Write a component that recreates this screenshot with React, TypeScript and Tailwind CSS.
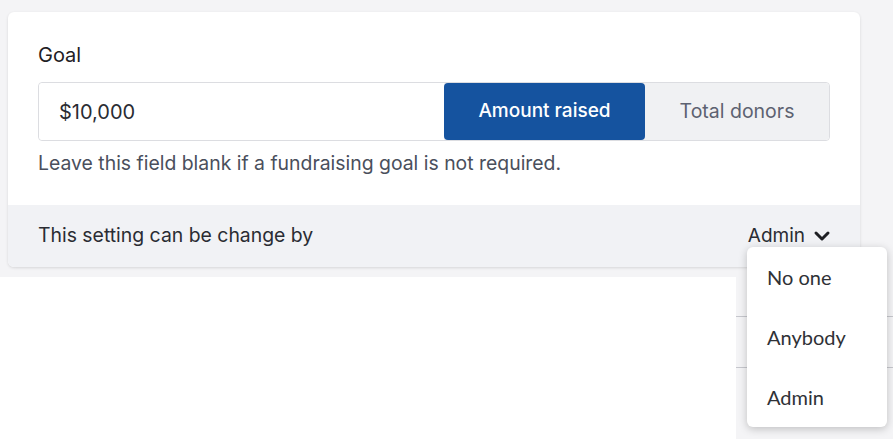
import { ChevronDown } from "lucide-react";

const options = ["No one", "Anybody", "Admin"];

const App = () => {
    return (
        <div className="relative w-[893px] h-[439px] overflow-hidden bg-[#f4f4f6] font-['Inter',sans-serif]">
            <div className="flex flex-col h-full">
                <div className="pt-3 pl-2">
                    <div className="w-[852px] h-[255px] bg-white rounded-md shadow-[0_1px_3px_rgba(0,0,0,0.12)] overflow-hidden flex flex-col">
                        <div className="flex-1 px-[30px] pt-[31px]">
                            <div className="text-[20px] leading-[24px] text-[#1f2024]">Goal</div>
                            <div className="mt-[15px] flex h-[59px] w-[792px] border border-[#dcdde1] rounded">
                                <div className="flex-1 flex items-center pl-5 text-[20px] text-[#2a2c33] bg-white rounded-l">$10,000</div>
                                <div className="flex bg-[#f0f1f3] rounded-r">
                                    <button className="w-[201px] bg-[#15539f] text-white text-[19px] font-medium rounded">Amount raised</button>
                                    <button className="w-[184px] text-[19.5px] text-[#5d6271]">Total donors</button>
                                </div>
                            </div>
                            <p className="mt-[10px] text-[19.4px] leading-[24px] text-[#4a4f5c]">Leave this field blank if a fundraising goal is not required.</p>
                        </div>
                        <div className="h-[62px] bg-[#f1f2f5] flex items-center justify-between pl-[30px] pr-[26px]">
                            <span className="text-[19.4px] text-[#2a2c33]">This setting can be change by</span>
                            <button className="flex items-center gap-[5px] text-[19px] text-[#2a2c33]">
                                Admin
                                <ChevronDown size={24} strokeWidth={3} className="text-[#1f2024]" />
                            </button>
                        </div>
                    </div>
                </div>
                <div className="mt-[10px] flex flex-1">
                    <div className="w-[736px] bg-white"></div>
                    <div className="flex-1 flex flex-col">
                        <div className="h-[40px] border-b border-[#c6c7cd]"></div>
                        <div className="h-[51px] border-b border-[#c6c7cd]"></div>
                    </div>
                </div>
            </div>
            <div className="absolute left-[747px] top-[247px] w-[140px] h-[180px] bg-white rounded-md shadow-[0_2px_8px_rgba(0,0,0,0.22)] flex flex-col font-['Lato',sans-serif]">
                {options.map((o) => (
                    <div key={o} className="h-[60px] flex items-center pl-5 text-[20px] text-[#2f3136]">{o}</div>
                ))}
            </div>
        </div>
    );
};

export default App;
